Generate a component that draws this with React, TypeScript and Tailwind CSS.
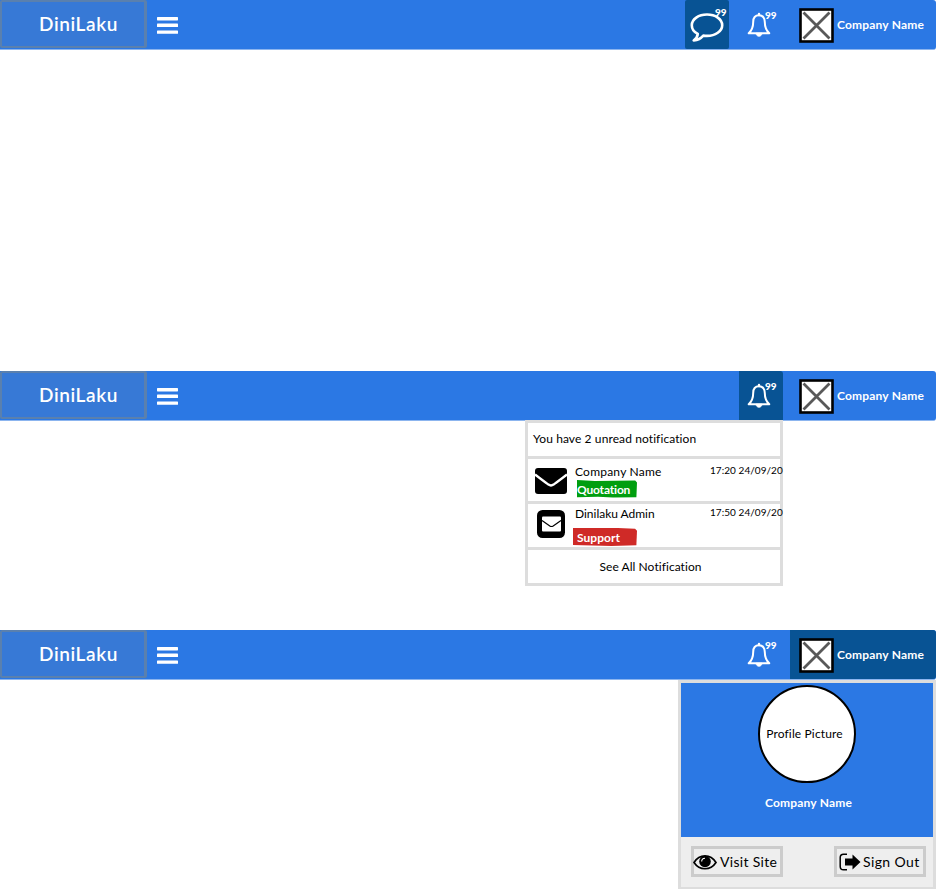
import type { ReactNode } from "react";

type Active = "chat" | "bell" | "profile";

function ChatIcon() {
  return (
    <svg viewBox="0 0 34 32" className="absolute left-[5px] top-[11px] h-[32px] w-[34px]" fill="none" stroke="white" strokeWidth="2.6" strokeLinejoin="round">
      <path d="M17 3.500C8.600 3.500 1.800 8.200 1.800 14.200c0 3.700 2.300 6.800 6 8.700-.2 2.600-1.600 4.600-4.100 6.600 4.300-.5 7.200-2.100 9.600-4.900 1.200.2 2.400.3 3.700.3 8.400 0 15.200-4.700 15.200-10.700S25.400 3.500 17 3.500Z" />
    </svg>
  );
}

function BellIcon() {
  return (
    <svg viewBox="0 0 24 26" className="absolute left-[8px] top-[12px] h-[26px] w-[24px]" fill="none" stroke="white" strokeWidth="2" strokeLinejoin="round" strokeLinecap="round">
      <path d="M12 3.200C7.800 3.200 6.200 6.600 6.200 10c0 5.600-1.500 8.600-4.500 11.300h20.600c-3-2.700-4.500-5.700-4.500-11.300 0-3.400-1.600-6.800-5.800-6.800Z" />
      <path d="M12 1.900v1.200" strokeWidth="2.400" />
      <path d="M9 21.600c.3 1.800 1.500 2.700 3 2.700s2.700-.9 3-2.700Z" fill="white" strokeWidth="0.800" />
    </svg>
  );
}

function Header({ active }: { active: Active }) {
  return (
    <header className="flex h-[50px] w-full rounded-r-[3px] border-b border-[#8cb5ef] bg-[#2b78e4]">
      <div className="flex h-[48px] w-[147px] items-center rounded-[2px] border-2 border-r-[3px] border-[#5a80ae] bg-[#3779d6] pl-[37px] text-[19px] tracking-[0.6px] text-white">
        <span className="font-semibold">DiniLaku</span>
      </div>
      <svg viewBox="0 0 21 17" className="ml-[10px] mt-[17px] h-[17px] w-[21px]" fill="white">
        <rect width="21" height="3.400" rx="0.600" />
        <rect y="6.600" width="21" height="3.400" rx="0.600" />
        <rect y="13.400" width="21" height="3.400" rx="0.600" />
      </svg>
      <div className="ml-auto flex h-full">
        {active === "chat" && (
          <div className="relative mr-[10px] w-[44px] rounded-[2px] bg-[#085394]">
            <ChatIcon />
            <span className="absolute left-[30px] top-[6px] text-[10px] font-black leading-[12px] text-white">99</span>
          </div>
        )}
        <div className={active === "bell" ? "relative mr-[7px] w-[44px] rounded-tr-[3px] bg-[#085394]" : "relative mr-[7px] w-[44px]"}>
          <BellIcon />
          <span className="absolute left-[26px] top-[9px] text-[10px] font-black leading-[12px] text-white">99</span>
        </div>
        <div className={active === "profile" ? "flex w-[146px] items-center rounded-r-[3px] bg-[#085394] pl-[9px]" : "flex w-[146px] items-center pl-[9px]"}>
          <svg viewBox="0 0 35 35" className="mt-px h-[35px] w-[35px]">
            <rect x="1.500" y="1.500" width="32" height="32" fill="white" stroke="black" strokeWidth="2.600" />
            <path d="M4.500 4.500 30.500 30.500M30.500 4.500 4.500 30.500" stroke="#595959" strokeWidth="2.800" />
          </svg>
          <span className="ml-[3px] whitespace-nowrap text-[12px] font-bold tracking-[0.18px] text-white">Company Name</span>
        </div>
      </div>
    </header>
  );
}

function Notice({ icon, name, time, children }: { icon: ReactNode; name: ReactNode; time: string; children: ReactNode }) {
  return (
    <div className="flex h-full">
      <div className="w-[45px] shrink-0">{icon}</div>
      <div className="w-[137px] shrink-0">
        <p className="ml-[2px] text-[12px] leading-[15px]">{name}</p>
        {children}
      </div>
      <span className="whitespace-nowrap text-[10px] leading-[12px] tracking-[0.050px]">{time}</span>
    </div>
  );
}

function Notifications() {
  return (
    <section className="relative -mt-px ml-[525px] h-[166px] w-[258px] border-[3px] border-[#ddd] bg-white text-black">
      <div className="flex h-[36px] items-center border-b-[3px] border-[#ddd] pb-[2px] pl-[5px] text-[12px] tracking-[0.100px]">
        You have 2 unread notification
      </div>
      <div className="h-[45px] border-b-[3px] border-[#ddd] pt-[5px]">
        <Notice
          name={<span className="tracking-[0.220px]">Company Name</span>}
          time="17:20 24/09/20"
          icon={
            <svg viewBox="0 0 32 26" className="ml-[7px] mt-[4px] h-[26px] w-[32px]">
              <rect width="32" height="26" rx="3" />
              <path d="M0 6.500C5 10.500 9 13.300 13 16.200c1.200.8 2 1.300 3 1.300s1.800-.5 3-1.300C23 13.300 27 10.500 32 6.500" fill="none" stroke="white" strokeWidth="2.300" />
            </svg>
          }
        >
          <span className="ml-[4px] mt-px flex h-[18px] w-[60px] items-center bg-[#009e0f] pt-[2px] text-[12px] font-bold tracking-[-0.180px] text-white [clip-path:polygon(0_0,30%_6%,97%_3%,100%_14%,99%_96%,60%_97%,35%_93%,0_96%)]">Quotation</span>
        </Notice>
      </div>
      <div className="h-[46px] border-b-[3px] border-[#ddd] pt-[2px]">
        <Notice
          name={<span className="tracking-[-0.020px]">Dinilaku Admin</span>}
          time="17:50 24/09/20"
          icon={
            <svg viewBox="0 0 28 28" className="ml-[9px] mt-[4px] h-[28px] w-[28px]">
              <rect width="28" height="28" rx="5.500" />
              <rect x="5" y="6.500" width="19" height="15" rx="1" fill="white" />
              <path d="M5 10.500 12.800 16q1.700 1 3.400 0L24 10.500" fill="none" stroke="black" strokeWidth="1.200" />
            </svg>
          }
        >
          <span className="mt-[7px] flex h-[18px] w-[64px] items-center bg-[#cf2a27] pl-[4px] pt-[2px] text-[12px] font-bold tracking-[0.050px] text-white [clip-path:polygon(0_0,70%_0,97%_4%,100%_15%,99%_96%,60%_100%,0_95%)]">Support</span>
        </Notice>
      </div>
      <div className="flex h-[33px] items-center justify-center pr-[7px] text-[12px] tracking-[0.060px]">See All Notification</div>
    </section>
  );
}

function Profile() {
  return (
    <section className="ml-[678px] h-[209px] w-[258px] border-[3px] border-b-[2px] border-[#ddd] bg-[#eee]">
      <div className="flex h-[154px] flex-col items-center bg-[#2b78e4]">
        <div className="mt-[2px] flex h-[98px] w-[98px] items-center justify-center rounded-full border-2 border-black bg-white pr-[5px] text-[12px] text-black">
          <span className="whitespace-nowrap tracking-[0.140px]">Profile Picture</span>
        </div>
        <span className="ml-[3px] mt-[11px] text-[12px] font-bold tracking-[0.180px] text-white">Company Name</span>
      </div>
      <div className="flex justify-between pl-[10px] pr-[7px] pt-[9px] text-[14px] text-black">
        <button className="flex h-[31px] w-[92px] items-center border-[3px] border-[#ccc]">
          <svg viewBox="0 0 24 16" className="-ml-px h-[16px] w-[24px] shrink-0">
            <path d="M1 8.500C6.500-.3 17.500-.3 23 8.500c-5.500 8.300-16.500 8.300-22 0Z" fill="none" stroke="black" strokeWidth="1.700" />
            <circle cx="12" cy="7.500" r="5.800" />
            <path d="M8.700 7.500C8.700 5.500 10 4.200 12 4.200" fill="none" stroke="white" strokeWidth="1.100" />
          </svg>
          <span className="ml-[3px] whitespace-nowrap tracking-[0.300px]">Visit Site</span>
        </button>
        <button className="flex h-[31px] w-[92px] items-center border-[3px] border-[#ccc]">
          <svg viewBox="0 0 22 18" className="ml-[2px] h-[18px] w-[22px] shrink-0">
            <path d="M8 1.200H4.500Q1.200 1.200 1.200 4.500v9q0 3.300 3.300 3.300H8" fill="none" stroke="black" strokeWidth="1.500" />
            <path d="M6 5.500h7.500V1.500L21.500 9 13.500 16.500V12.500H6Z" />
          </svg>
          <span className="ml-[2px] whitespace-nowrap tracking-[0.400px]">Sign Out</span>
        </button>
      </div>
    </section>
  );
}

export default function App() {
  return (
    <main className="h-[890px] w-[936px] overflow-hidden bg-white font-['Lato','Noto_Sans',sans-serif]">
      <div className="h-[371px]">
        <Header active="chat" />
      </div>
      <div className="h-[259px]">
        <Header active="bell" />
        <Notifications />
      </div>
      <div className="h-[260px]">
        <Header active="profile" />
        <Profile />
      </div>
    </main>
  );
}
